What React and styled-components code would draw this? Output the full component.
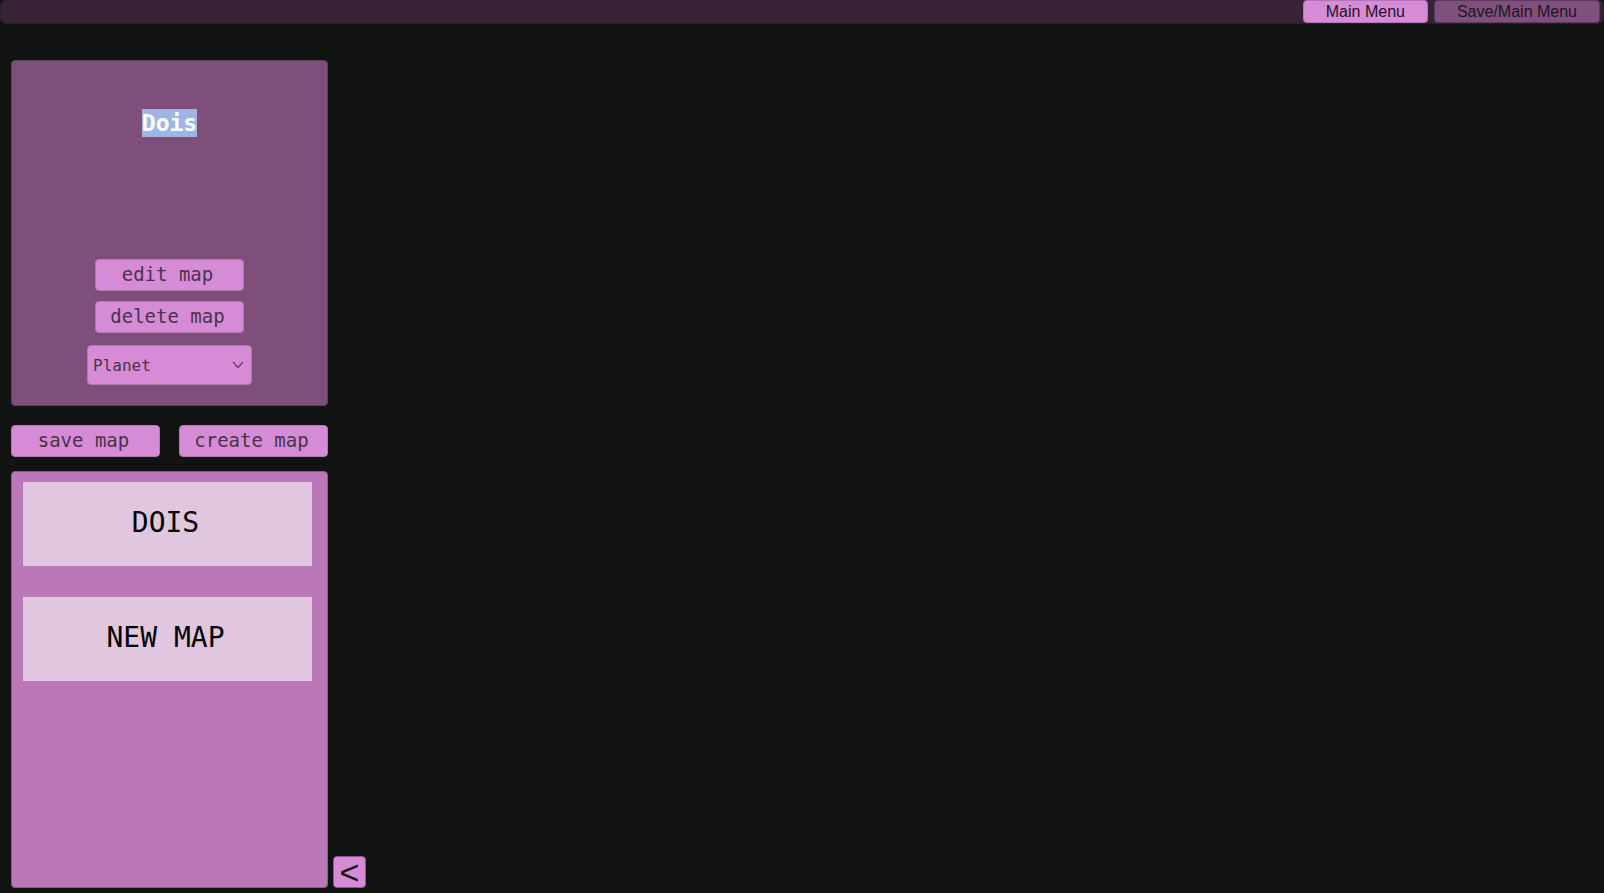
import React, { useEffect, useRef, useState } from "react";
import styled, { createGlobalStyle } from "styled-components";

const GlobalStyle = createGlobalStyle`
  * {
    box-sizing: border-box;
  }
  body {
    margin: 0;
    background-color: #121413;
    font-family: "Liberation Sans", Arial, sans-serif;
  }
`;

const Page = styled.div`
  display: flex;
  flex-direction: column;
  min-height: 100vh;
`;

const TopBar = styled.header`
  display: flex;
  justify-content: flex-end;
  gap: 6px;
  height: 24px;
  padding: 0 3px 0;
  border: 1px solid #2b1d2a;
  border-top: none;
  border-radius: 6px;
  background-color: #382336;
`;

const MenuButton = styled.button`
  padding: 0 22px;
  border: 1px solid ${props => (props.$dim ? "#5e3b5c" : "#b374b2")};
  border-radius: 4px;
  background-color: ${props => (props.$dim ? "#7f507d" : "#d68bd6")};
  color: #22141f;
  font-family: inherit;
  font-size: 16px;
  line-height: 20px;
  cursor: pointer;
`;

const Workspace = styled.main`
  display: flex;
  flex: 1;
  align-items: stretch;
  gap: 5px;
  padding: 36px 11px 5px;
`;

const Sidebar = styled.aside`
  display: flex;
  flex-direction: column;
  width: 317px;
  font-family: "DejaVu Sans Mono", monospace;
`;

const MapPanel = styled.section`
  display: flex;
  flex-direction: column;
  align-items: center;
  justify-content: space-between;
  min-height: 346px;
  padding: 48px 20px 20px;
  border: 1px solid #5f3d5d;
  border-radius: 4px;
  background-color: #7d4f7a;
`;

const MapName = styled.input`
  width: 100%;
  height: 28px;
  padding: 0;
  border: none;
  outline: none;
  background: transparent;
  color: #fff;
  caret-color: transparent;
  font-family: inherit;
  font-size: 23px;
  font-weight: bold;
  line-height: 28px;
  text-align: center;
  &::selection {
    background-color: rgba(160, 182, 230, 0.99);
    color: #fff;
  }
`;

const MapActions = styled.div`
  display: flex;
  flex-direction: column;
  align-items: center;
  gap: 10px;
`;

const ActionButton = styled.button`
  width: 149px;
  height: 32px;
  padding: 0 4px 2px 0;
  border: 1px solid #b576b4;
  border-radius: 4px;
  background-color: #d68bd6;
  color: #4a334a;
  font-family: inherit;
  font-size: 19px;
  line-height: 24px;
  white-space: nowrap;
  cursor: pointer;
`;

const SelectBox = styled.div`
  display: grid;
  align-items: center;
  width: 165px;
  margin-top: 2px;
  > * {
    grid-area: 1 / 1;
  }
`;

const TypeSelect = styled.select`
  appearance: none;
  width: 100%;
  height: 40px;
  padding: 0 28px 0 5px;
  border: 1px solid #b576b4;
  border-radius: 4px;
  background-color: #d68bd6;
  color: #4a334a;
  font-family: inherit;
  font-size: 16px;
`;

const Chevron = styled.svg`
  justify-self: end;
  width: 12px;
  height: 8px;
  margin-right: 8px;
  pointer-events: none;
`;

const ButtonRow = styled.div`
  display: flex;
  justify-content: space-between;
  padding: 19px 0 14px;
`;

const MapList = styled.ul`
  display: flex;
  flex: 1;
  flex-direction: column;
  gap: 31px;
  margin: 0;
  padding: 10px 15px 11px 11px;
  border: 1px solid #8c598a;
  border-radius: 4px;
  background-color: #ba78b8;
  list-style: none;
`;

const MapItem = styled.button`
  display: block;
  width: 100%;
  height: 84px;
  padding: 0 4px 4px 0;
  border: none;
  background-color: #e0c6df;
  color: #000;
  font-family: inherit;
  font-size: 28px;
  text-transform: uppercase;
  cursor: pointer;
`;

const CollapseButton = styled.button`
  align-self: flex-end;
  width: 33px;
  height: 32px;
  padding: 0;
  border: 1px solid #8c598a;
  border-radius: 4px;
  background-color: #d68bd6;
  color: #121413;
  font-family: inherit;
  font-size: 34px;
  line-height: 30px;
  cursor: pointer;
`;

const maps = ["Dois", "New map"];

export default () => {
  const [name, setName] = useState(maps[0]);
  const nameInput = useRef(null);

  useEffect(() => {
    nameInput.current.focus();
    nameInput.current.select();
  }, []);

  return (
    <Page>
      <GlobalStyle />
      <TopBar>
        <MenuButton>Main Menu</MenuButton>
        <MenuButton $dim>Save/Main Menu</MenuButton>
      </TopBar>
      <Workspace>
        <Sidebar>
          <MapPanel>
            <MapName
              ref={nameInput}
              aria-label="Map name"
              value={name}
              onChange={e => setName(e.target.value)}
            />
            <MapActions>
              <ActionButton>edit map</ActionButton>
              <ActionButton>delete map</ActionButton>
              <SelectBox>
                <TypeSelect aria-label="Map type" defaultValue="planet">
                  <option value="planet">Planet</option>
                </TypeSelect>
                <Chevron viewBox="0 0 12 8" fill="none" stroke="#5c405c">
                  <path d="M1 1 L6 6.5 L11 1" strokeWidth="1.2" />
                </Chevron>
              </SelectBox>
            </MapActions>
          </MapPanel>
          <ButtonRow>
            <ActionButton>save map</ActionButton>
            <ActionButton>create map</ActionButton>
          </ButtonRow>
          <MapList>
            {maps.map(map => (
              <li key={map}>
                <MapItem onClick={() => setName(map)}>{map}</MapItem>
              </li>
            ))}
          </MapList>
        </Sidebar>
        <CollapseButton aria-label="Collapse sidebar">&lt;</CollapseButton>
      </Workspace>
    </Page>
  );
};
